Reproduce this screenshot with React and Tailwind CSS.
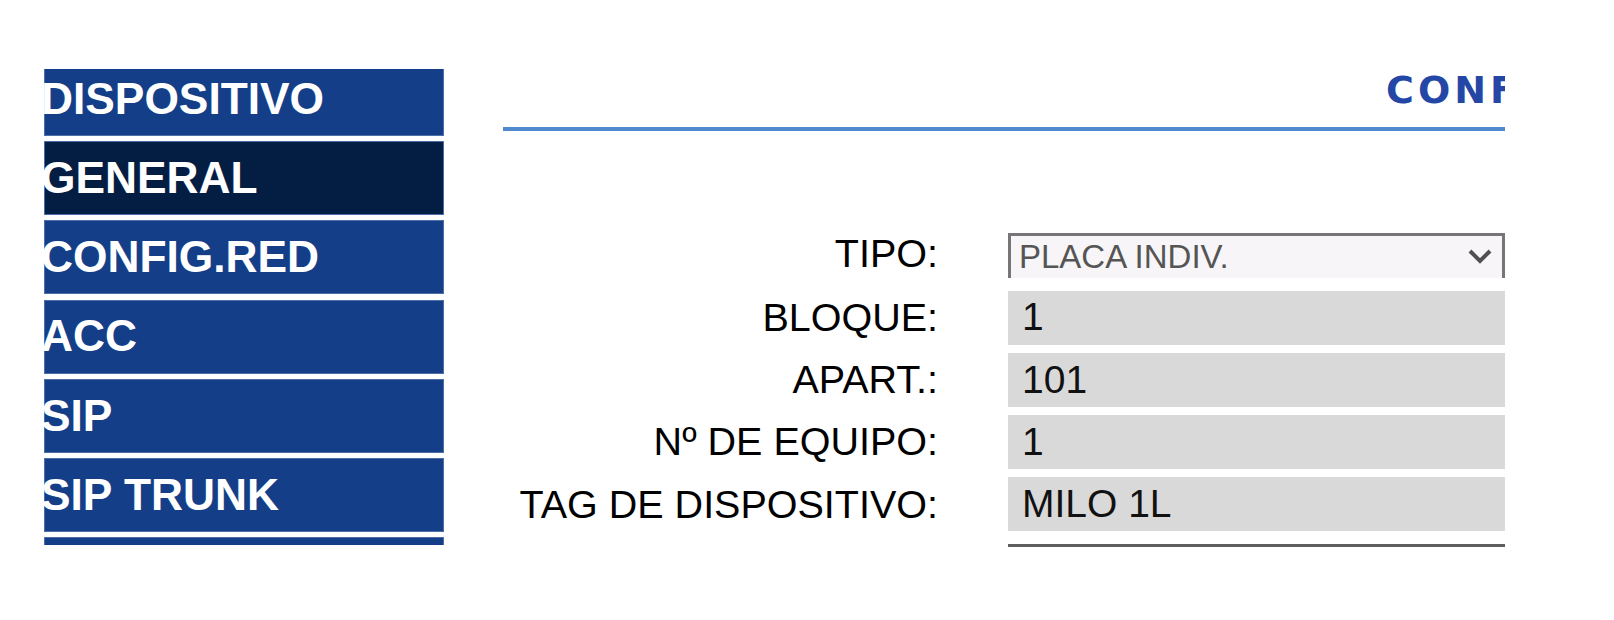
import React from 'react';

const menu = [
  { label: 'DISPOSITIVO' },
  { label: 'GENERAL', active: true },
  { label: 'CONFIG.RED' },
  { label: 'ACC' },
  { label: 'SIP' },
  { label: 'SIP TRUNK' },
  { label: 'RTSP' },
];

const fields = [
  { label: 'BLOQUE:', value: '1' },
  { label: 'APART.:', value: '101' },
  { label: 'Nº DE EQUIPO:', value: '1' },
  { label: 'TAG DE DISPOSITIVO:', value: 'MILO 1L' },
];

function Chevron() {
  return (
    <svg width="24" height="15" viewBox="0 0 24 15" fill="none">
      <polyline points="2,2 12,12 22,2" stroke="#505050" strokeWidth="4" strokeLinejoin="miter" />
    </svg>
  );
}

export default function App() {
  return (
    <div className="w-[1614px] h-[620px] bg-white flex items-start font-['Liberation_Sans',Arial,sans-serif]">
      {/* side menu, clipped as in the zoomed page */}
      <div className="ml-[44px] mt-[69px] w-[400px] h-[476px] overflow-hidden">
        <div className="-mt-[7.3px] flex flex-col gap-[5.3px]">
          {menu.map((item) => (
            <div
              key={item.label}
              className={`h-[74px] shrink-0 flex items-center border border-[#4d6ea6] ${
                item.active ? 'bg-[#041d43]' : 'bg-[#143f88]'
              }`}
            >
              <span className="-ml-[4px] text-white font-bold text-[44.3px] leading-none whitespace-nowrap">
                {item.label}
              </span>
            </div>
          ))}
        </div>
      </div>

      {/* main panel */}
      <div className="ml-[59px] w-[1002px] overflow-hidden flex flex-col">
        <div className="mt-[69.5px] h-[40px] pl-[883px] whitespace-nowrap font-['DejaVu_Sans',Verdana,sans-serif] text-[38px] tracking-[4px] leading-[40px] font-bold text-[#2447a6]">
          CONFIGURACIÓN GENERAL
        </div>
        <div className="mt-[17.5px] h-[4px] bg-[#5089cf]" />

        <div className="mt-[101.6px] grid grid-cols-[435px_70px_497px]">
          {/* TIPO select */}
          <div className="col-start-1 h-[45.5px] flex items-center justify-end pb-[4px] text-[39.5px] text-black whitespace-nowrap">
            TIPO:
          </div>
          <div className="col-start-3 h-[45.5px] border-t-[3px] border-l-[3px] border-r-[3px] border-[#767676] bg-[#f8f5f8] flex items-center justify-between pl-[8px] pr-[10px]">
            <span className="text-[33px] text-[#555555] leading-none whitespace-nowrap">PLACA INDIV.</span>
            <Chevron />
          </div>
          <div className="col-span-3 h-[12.5px]" />

          {fields.map((f, i) => (
            <React.Fragment key={f.label}>
              <div className="col-start-1 h-[54px] flex items-center justify-end text-[39.5px] text-black whitespace-nowrap">
                {f.label}
              </div>
              <div className="col-start-3 h-[54px] bg-[#d9d9d9] flex items-center pl-[14px] text-[39px] text-[#111111] whitespace-nowrap">
                {f.value}
              </div>
              <div className={`col-span-3 ${i === fields.length - 1 ? 'h-[12.7px]' : 'h-[8.2px]'}`} />
            </React.Fragment>
          ))}

          <div className="col-start-3 h-[3px] bg-[#5e5e5e]" />
        </div>
      </div>
    </div>
  );
}
